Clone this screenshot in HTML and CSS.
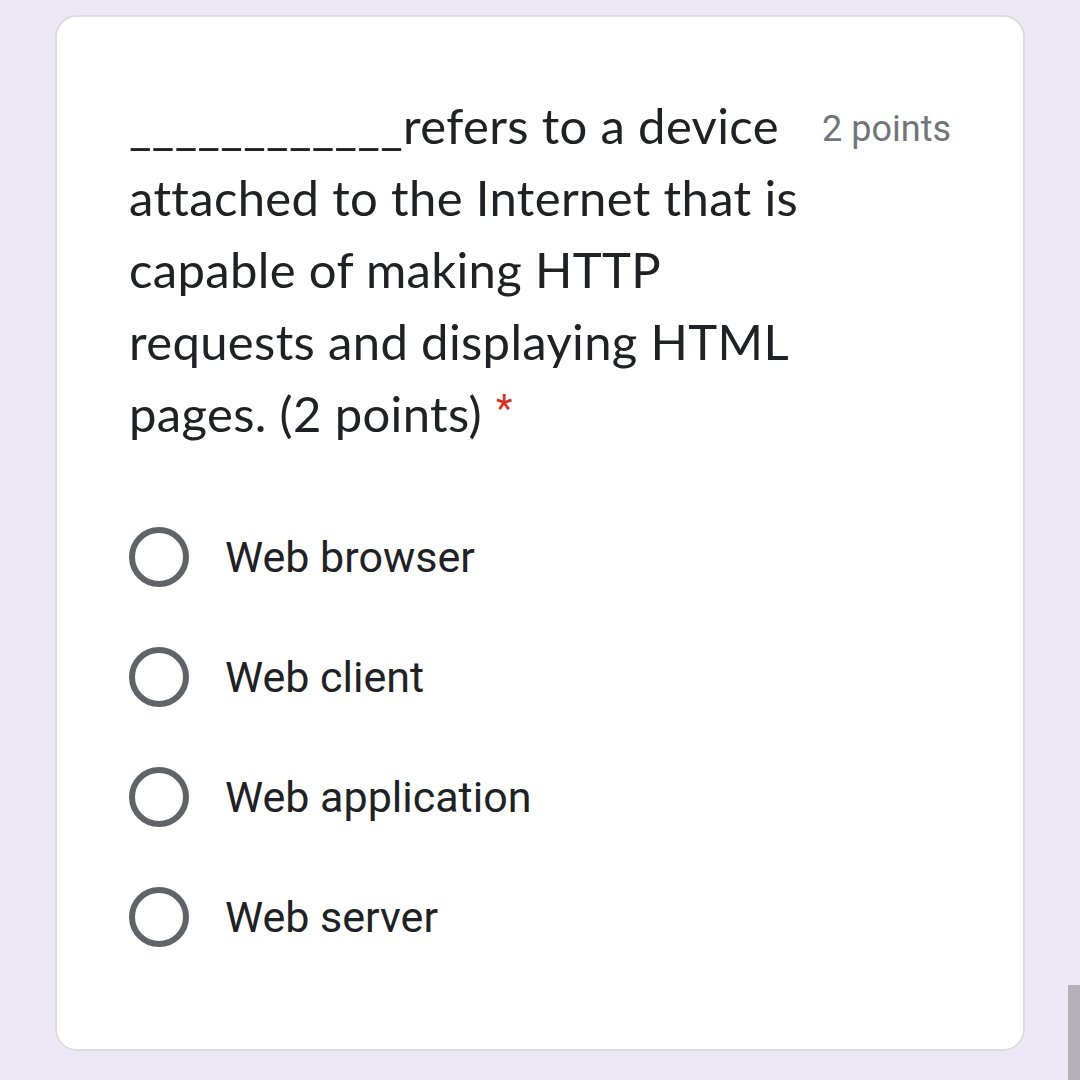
FILE: index.html
```html
<!DOCTYPE html>
<html lang="en">
<head>
<meta charset="utf-8">
<title>Question</title>
<link rel="stylesheet" href="styles.css">
</head>
<body>
<div class="card">
  <div class="header">
    <div class="title">____________refers to a device attached to the Internet that is capable of making HTTP requests and displaying HTML pages. (2 points)<span class="req">*</span></div>
    <div class="points">2 points</div>
  </div>
  <div class="options">
    <div class="option"><span class="radio"></span><span class="label">Web browser</span></div>
    <div class="option"><span class="radio"></span><span class="label">Web client</span></div>
    <div class="option"><span class="radio"></span><span class="label">Web application</span></div>
    <div class="option"><span class="radio"></span><span class="label">Web server</span></div>
  </div>
</div>
<div class="scrollbar"></div>
</body>
</html>
```
FILE: styles.css
```css
html, body {
  margin: 0;
  padding: 0;
  background: #ede8f6;
  height: 1080px;
  overflow: hidden;
}
body {
  padding-top: 15px;
  box-sizing: border-box;
}
.card {
  margin: 0 55px;
  background: #ffffff;
  border: 2px solid #dadce0;
  border-radius: 22px;
  padding: 72px;
}
.header {
  display: flex;
  align-items: flex-start;
  gap: 24px;
}
.title {
  flex: 1;
  font-family: Lato, "Open Sans", sans-serif;
  font-size: 49px;
  line-height: 72px;
  color: #202124;
  letter-spacing: 0.35px;
  font-variant-ligatures: none;
}
.req {
  color: #d93025;
  font-family: Roboto, sans-serif;
  font-size: 38px;
  line-height: 1;
  margin-left: 14px;
  position: relative;
  top: -10px;
}
.points {
  font-family: Roboto, sans-serif;
  font-size: 36px;
  line-height: 72px;
  color: #70757a;
  white-space: nowrap;
  padding-top: 4px;
}
.options {
  margin-top: 48px;
  display: flex;
  flex-direction: column;
}
.option {
  height: 120px;
  display: flex;
  align-items: center;
  gap: 36px;
}
.radio {
  width: 60px;
  height: 60px;
  box-sizing: border-box;
  border: 6px solid #5f6368;
  border-radius: 50%;
  flex: none;
}
.label {
  font-family: Roboto, sans-serif;
  font-size: 43px;
  color: #202124;
}
.scrollbar {
  position: fixed;
  right: 0;
  top: 985px;
  width: 12px;
  height: 95px;
  background: #b3b0b8;
}
```
